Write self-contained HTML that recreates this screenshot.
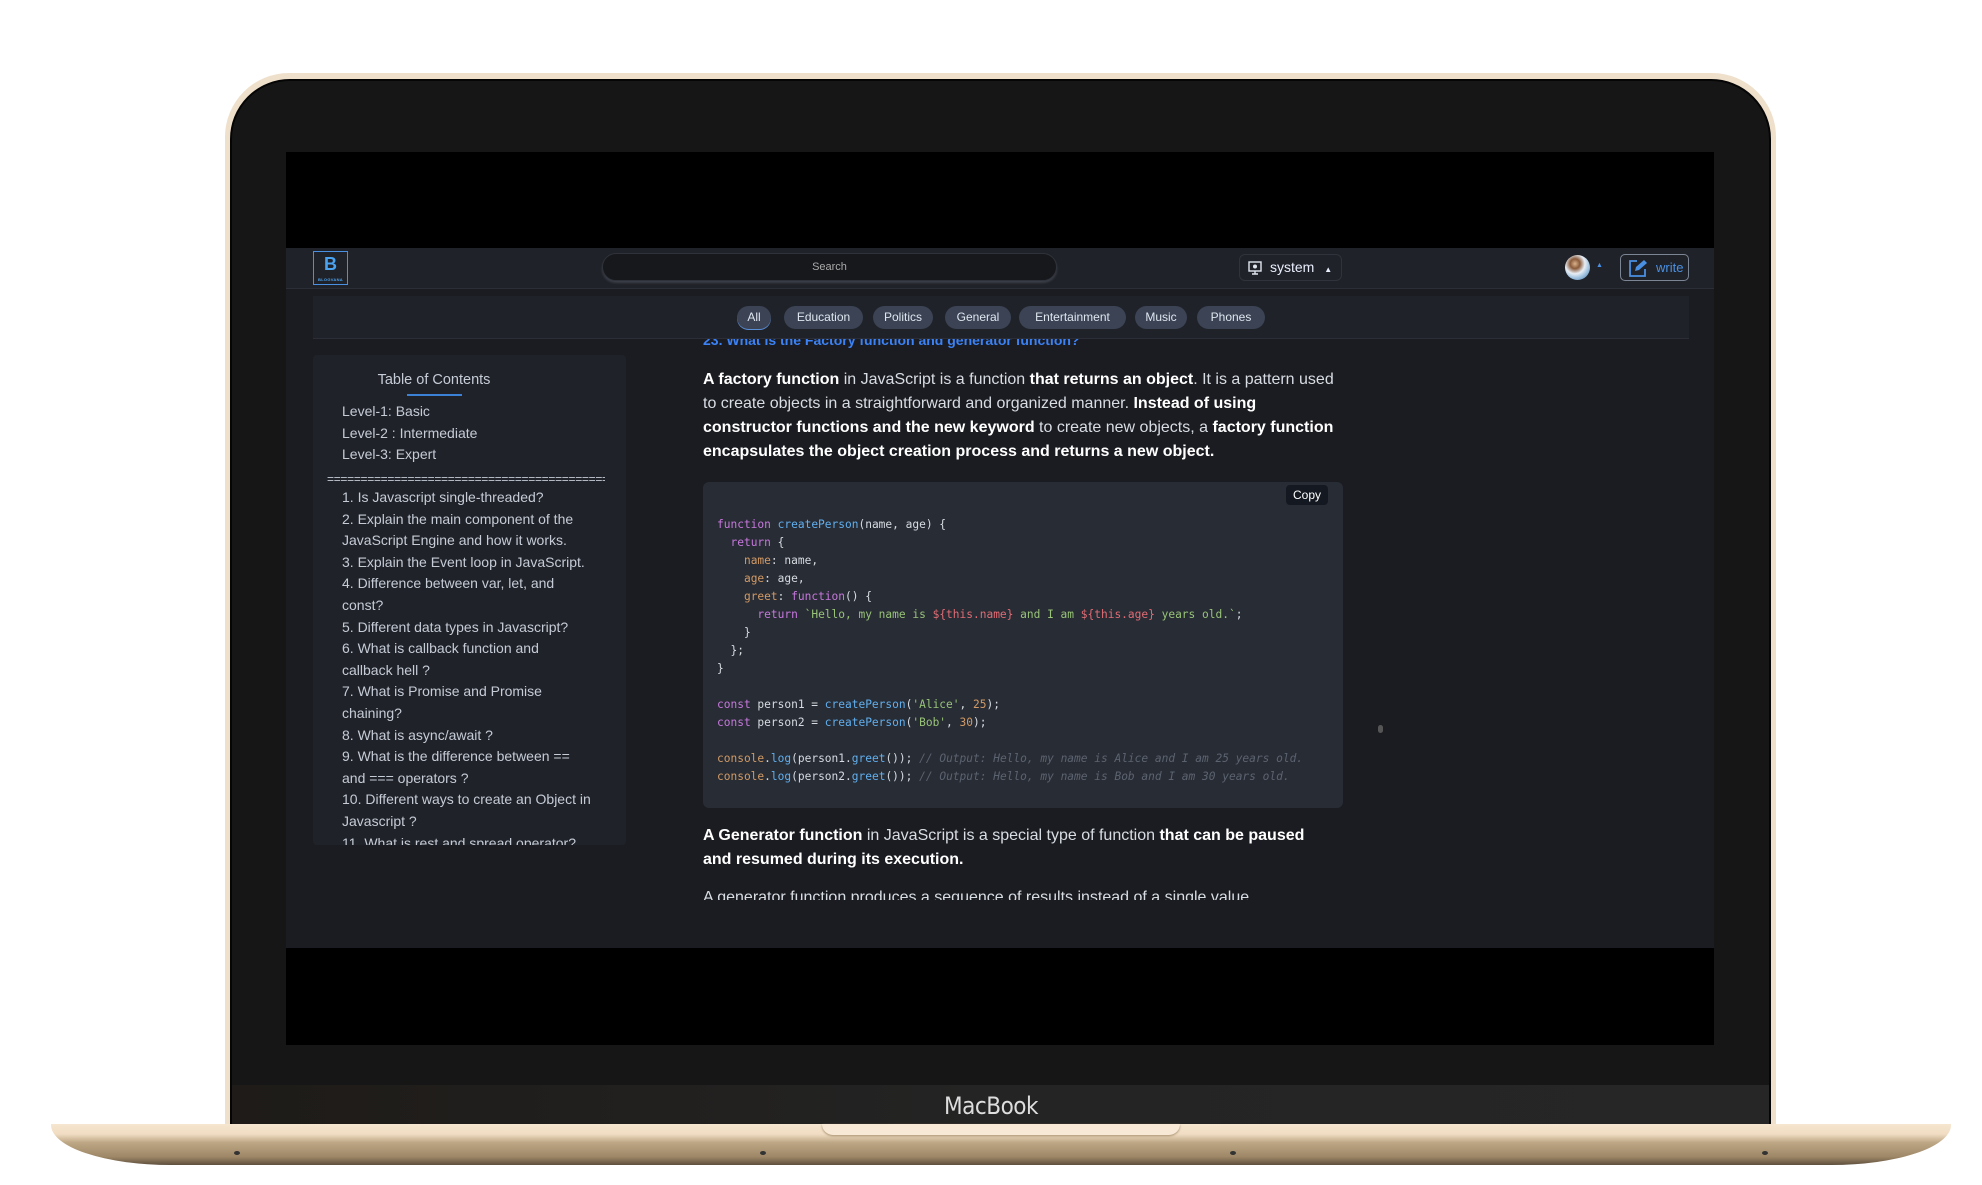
<!DOCTYPE html>
<html><head><meta charset="utf-8"><style>
*{margin:0;padding:0;box-sizing:border-box}
body{width:1982px;height:1185px;background:#fff;position:relative;overflow:hidden;font-family:"Liberation Sans",sans-serif}
.abs{position:absolute}
#frame{left:225px;top:73px;width:1551px;height:1065px;border-radius:64px 64px 0 0;background:#efe0cc}
#bezel{left:230px;top:79px;width:1541px;height:1055px;border-radius:60px 60px 0 0;background:#161616;border:2px solid #050505}
#screen{left:286px;top:152px;width:1428px;height:893px;background:#000}
#chin{left:232px;top:1085px;width:1537px;height:40px;background:linear-gradient(90deg,#1e1b18,#242424 50%,#262626)}
#mac{left:0;width:1982px;top:1092px;text-align:center;color:#ddd;font-size:24px;font-family:"DejaVu Sans Condensed","Liberation Sans",sans-serif;font-weight:200;letter-spacing:-0.5px}
#base{left:51px;top:1124px;width:1900px;height:41px;background:linear-gradient(180deg,#f6e6d0 0,#f0dcc2 25%,#bda785 45%,#9e8766 80%,#5e4f3e 100%);border-radius:0 0 120px 120px/0 0 40px 40px}
#notch{left:822px;top:1124px;width:358px;height:11px;background:#f7e9d6;border-radius:0 0 18px 18px;box-shadow:0 1px 2px #a89070}
.foot{width:6px;height:4px;background:#333;border-radius:50%;top:1151px}
#app{left:286px;top:248px;width:1428px;height:700px;background:#1b1c21;overflow:hidden}
#nav{left:0;top:0;width:1428px;height:41px;background:#202229;border-bottom:1px solid #2b2e36}
#logo{left:27px;top:3px;width:35px;height:34px;border:1px solid #4a90e2;text-align:center;color:#4aa3f0;font-weight:bold;font-size:18px;line-height:24px}
#logo small{position:absolute;left:2px;right:2px;bottom:2px;font-size:4px;line-height:4px;letter-spacing:.3px}
#search{left:316px;top:5px;width:455px;height:28px;border-radius:14px;background:#17181c;border:1px solid #2f323a;box-shadow:0 2px 2px #3b3f48;color:#aaa;font-size:11px;text-align:center;line-height:26px}
#sys{left:953px;top:6px;width:103px;height:27px;border:1px solid #30333b;border-radius:6px;color:#e8eefc;font-size:14px;line-height:25px;padding-left:30px}
#av{left:1279px;top:7px;width:25px;height:25px;border-radius:50%;background:radial-gradient(circle at 40% 35%,#d9b38c 0,#8a5a3a 22%,#e8eef5 45%,#9ec0de 65%,#3e6fa8 100%)}
#write{left:1334px;top:6px;width:69px;height:27px;border:1px solid #7c8594;border-radius:5px;color:#4a90e2;font-size:13px;line-height:25px;padding-left:35px}
#cats{left:27px;top:48px;width:1376px;height:43px;background:#202229;border-bottom:1px solid #2b2e36}
.pill{position:absolute;top:10px;height:23px;border-radius:12px;background:#3b4354;color:#dfe6f0;font-size:12px;line-height:23px;text-align:center}
#toc{left:27px;top:107px;width:313px;height:490px;background:#202229;border-radius:4px;overflow:hidden;color:#c5ccd6;font-size:14px}
#toc .t{position:absolute;left:0;width:242px;text-align:center;top:17px;font-size:14.5px}
#toc .u{position:absolute;left:94px;width:55px;top:39px;height:2px;background:#3b82d6}
#toc .l{position:absolute;left:29px;width:270px;line-height:21.6px}
#sb{left:333px;top:2px;width:5px;height:184px;background:#555960;border-radius:3px}
#main{left:417px;top:91px;width:660px;height:561px;overflow:hidden;color:#d8dde4;font-size:16px}
.p{position:absolute;left:0;line-height:24px;white-space:nowrap}
.p b{color:#fff}
#code{left:0;top:143px;width:640px;height:326px;background:#282c34;border-radius:6px;font-family:"DejaVu Sans Mono","Liberation Mono",monospace;font-size:11.2px;color:#d6dbe2}
#code pre{position:absolute;left:14px;top:34px;line-height:18px;font-family:inherit}
#copy{left:583px;top:3px;width:42px;height:20px;background:#141821;border-radius:4px;color:#fff;font-size:12px;line-height:20px;text-align:center;font-family:"Liberation Sans",sans-serif}
.k{color:#c678dd}.f{color:#61afef}.s{color:#98c379}.n{color:#d19a66}.r{color:#e06c75}.c{color:#5c6370;font-style:italic}.pr{color:#d19a66}
</style></head><body>
<div id="frame" class="abs"></div>
<div id="bezel" class="abs"></div>
<div id="screen" class="abs"></div>
<div id="app" class="abs">
 <div id="nav" class="abs">
  <div id="logo" class="abs">B<small>BLOGVANA</small></div>
  <div id="search" class="abs">Search</div>
  <div id="sys" class="abs"><svg class="abs" style="left:8px;top:6px" width="14" height="14" viewBox="0 0 14 14"><rect x="1" y="1" width="12" height="9" fill="none" stroke="#dfe6f0" stroke-width="1.4"/><circle cx="7" cy="5.5" r="2" fill="#dfe6f0"/><path d="M4 13h6M7 10v3" stroke="#dfe6f0" stroke-width="1.4"/></svg>system <span style="font-size:8px;margin-left:6px">▲</span></div>
  <div id="av" class="abs"></div>
  <div class="abs" style="left:1310px;top:14px;color:#4a90e2;font-size:7px">▲</div>
  <div id="write" class="abs"><svg class="abs" style="left:7px;top:4px" width="20" height="19" viewBox="0 0 20 19"><path d="M9 2H2v15h15v-7" fill="none" stroke="#4a90e2" stroke-width="1.8"/><path d="M7 12l1-4 8-7 3 3-8 7z" fill="#4a90e2"/></svg>write</div>
 </div>
 <div id="cats" class="abs">
  <div class="pill" style="left:424px;width:34px;box-shadow:0 1px 0 #5a8fd8">All</div>
  <div class="pill" style="left:471px;width:79px">Education</div>
  <div class="pill" style="left:560px;width:60px">Politics</div>
  <div class="pill" style="left:632px;width:66px">General</div>
  <div class="pill" style="left:706px;width:107px">Entertainment</div>
  <div class="pill" style="left:822px;width:52px">Music</div>
  <div class="pill" style="left:884px;width:68px">Phones</div>
 </div>
 <div id="toc" class="abs">
  <div class="t">Table of Contents</div><div class="u"></div>
  <div class="l" style="top:46px">Level-1: Basic<br>Level-2 : Intermediate<br>Level-3: Expert</div>
  <div class="l" style="left:14px;top:114px;font-size:12px;white-space:nowrap;overflow:hidden;width:278px;letter-spacing:-0.3px">=================================================</div>
  <div class="l" style="top:132px;width:250px;font-size:14px">1. Is Javascript single-threaded?<br>2. Explain the main component of the JavaScript Engine and how it works.<br>3. Explain the Event loop in JavaScript.<br>4. Difference between var, let, and const?<br>5. Different data types in Javascript?<br>6. What is callback function and callback hell ?<br>7. What is Promise and Promise chaining?<br>8. What is async/await ?<br>9. What is the difference between == and === operators ?<br>10. Different ways to create an Object in Javascript ?<br>11. What is rest and spread operator?</div>
  <div id="sb" class="abs"></div>
 </div>
 <div class="abs" style="left:1092px;top:477px;width:5px;height:8px;background:#555;border-radius:3px"></div>
 <div id="main" class="abs">
  <div class="p" style="top:-11px;color:#3b82f6;font-weight:bold;font-size:14px">23. What is the Factory function and generator function?</div>
  <div class="p" style="top:29px"><b>A factory function</b> in JavaScript is a function <b>that returns an object</b>. It is a pattern used</div>
  <div class="p" style="top:53px">to create objects in a straightforward and organized manner. <b>Instead of using</b></div>
  <div class="p" style="top:77px"><b>constructor functions and the new keyword</b> to create new objects, a <b>factory function</b></div>
  <div class="p" style="top:101px"><b>encapsulates the object creation process and returns a new object.</b></div>
  <div id="code" class="abs"><div id="copy" class="abs">Copy</div>
<pre><span class="k">function</span> <span class="f">createPerson</span>(name, age) {
  <span class="k">return</span> {
    <span class="pr">name</span>: name,
    <span class="pr">age</span>: age,
    <span class="pr">greet</span>: <span class="k">function</span>() {
      <span class="k">return</span> <span class="s">`Hello, my name is </span><span class="r">${this.name}</span><span class="s"> and I am </span><span class="r">${this.age}</span><span class="s"> years old.`</span>;
    }
  };
}

<span class="k">const</span> person1 = <span class="f">createPerson</span>(<span class="s">'Alice'</span>, <span class="n">25</span>);
<span class="k">const</span> person2 = <span class="f">createPerson</span>(<span class="s">'Bob'</span>, <span class="n">30</span>);

<span class="pr">console</span>.<span class="f">log</span>(person1.<span class="f">greet</span>()); <span class="c">// Output: Hello, my name is Alice and I am 25 years old.</span>
<span class="pr">console</span>.<span class="f">log</span>(person2.<span class="f">greet</span>()); <span class="c">// Output: Hello, my name is Bob and I am 30 years old.</span></pre>
  </div>
  <div class="p" style="top:485px"><b>A Generator function</b> in JavaScript is a special type of function <b>that can be paused</b></div>
  <div class="p" style="top:509px"><b>and resumed during its execution.</b></div>
  <div class="p" style="top:547px">A generator function produces a sequence of results instead of a single value</div>
 </div>
</div>
<div id="chin" class="abs"></div>
<div id="mac" class="abs">MacBook</div>
<div id="base" class="abs"></div>
<div id="notch" class="abs"></div>
<div class="abs foot" style="left:234px"></div>
<div class="abs foot" style="left:760px"></div>
<div class="abs foot" style="left:1230px"></div>
<div class="abs foot" style="left:1762px"></div>
</body></html>
